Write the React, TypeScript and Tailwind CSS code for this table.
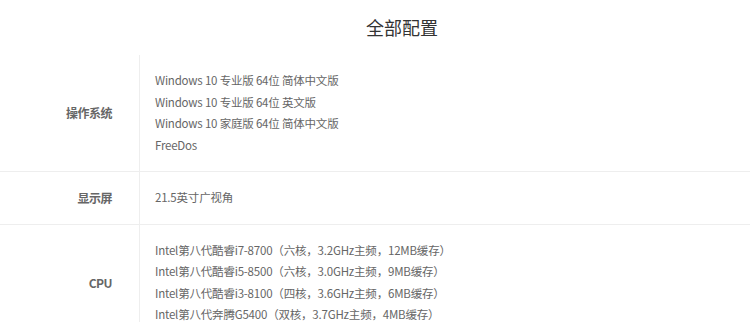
const specs = [
  {
    label: '操作系统',
    values: [
      'Windows 10 专业版 64位 简体中文版',
      'Windows 10 专业版 64位 英文版',
      'Windows 10 家庭版 64位 简体中文版',
      'FreeDos',
    ],
  },
  { label: '显示屏', values: ['21.5英寸广视角'] },
  {
    label: 'CPU',
    values: [
      'Intel第八代酷睿i7-8700（六核，3.2GHz主频，12MB缓存）',
      'Intel第八代酷睿i5-8500（六核，3.0GHz主频，9MB缓存）',
      'Intel第八代酷睿i3-8100（四核，3.6GHz主频，6MB缓存）',
      'Intel第八代奔腾G5400（双核，3.7GHz主频，4MB缓存）',
    ],
  },
];

export default function App() {
  return (
    <div
      className="w-[750px] h-[322px] overflow-hidden bg-white"
      style={{ fontFamily: '"Noto Sans CJK SC", sans-serif' }}
    >
      <h2 className="h-[55px] pl-[54px] pt-[14px] text-center text-[18px] leading-[26px] text-[#333] font-normal">
        全部配置
      </h2>
      <div>
        {specs.map((row) => (
          <div key={row.label} className="flex border-b border-[#eee]">
            <div className="w-[139px] shrink-0 flex items-center justify-end pr-[27px] text-[12px] font-bold tracking-[-0.5px] text-[#666]">
              {row.label}
            </div>
            <div className="flex-1 border-l border-[#eee] pl-[15px] py-[15px] text-[11.5px] leading-[21.5px] tracking-[-0.2px] text-[#666]">
              {row.values.map((v) => (
                <div key={v}>{v}</div>
              ))}
            </div>
          </div>
        ))}
      </div>
    </div>
  );
}
